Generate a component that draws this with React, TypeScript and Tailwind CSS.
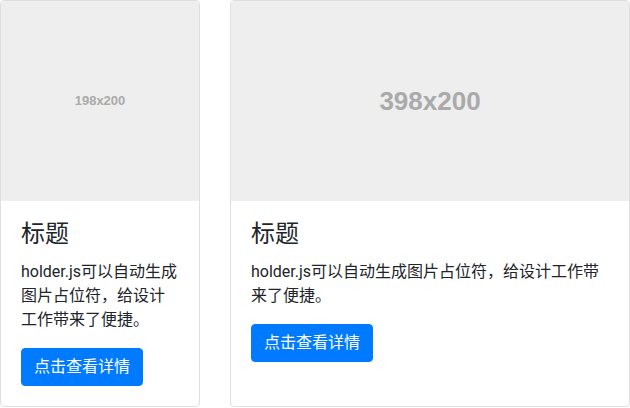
export default function App() {
  const font = { fontFamily: 'Roboto, "Noto Sans CJK SC", sans-serif' };
  const cards = [
    { w: 'w-[200px]', label: '198x200', size: 'text-[13px]' },
    { w: 'w-[400px]', label: '398x200', size: 'text-[26px]' },
  ];

  return (
    <div className="flex gap-[30px] items-stretch bg-white text-[#212529]" style={font}>
      {cards.map((c) => (
        <div
          key={c.label}
          className={`${c.w} flex flex-col border border-[#dfdfdf] rounded-[4px] bg-white`}
        >
          <div className="h-[200px] bg-[#eeeeee] rounded-t-[3px] flex items-center justify-center">
            <span
              className={`${c.size} font-bold text-[#aaaaaa]`}
              style={{ fontFamily: '"Liberation Sans", Arial, sans-serif' }}
            >
              {c.label}
            </span>
          </div>
          <div className="p-5 flex-1">
            <h4 className="text-2xl leading-[27px] mb-3 font-normal">标题</h4>
            <p className="text-base leading-6 mb-4">holder.js可以自动生成图片占位符，给设计工作带来了便捷。</p>
            <button className="bg-[#007bff] border border-[#007bff] text-white text-base leading-6 px-3 py-[6px] rounded-[4px]">
              点击查看详情
            </button>
          </div>
        </div>
      ))}
    </div>
  );
}
